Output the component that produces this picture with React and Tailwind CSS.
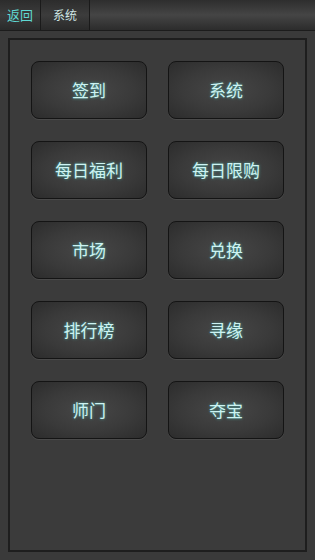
import React from "react";

const items = [
  "签到",
  "系统",
  "每日福利",
  "每日限购",
  "市场",
  "兑换",
  "排行榜",
  "寻缘",
  "师门",
  "夺宝",
];

const font = {
  fontFamily: '"Noto Sans CJK SC", "Noto Sans", sans-serif',
};

const App = () => {
  return (
    <div
      className="w-[315px] h-[560px] bg-[#3a3a3a] flex flex-col overflow-hidden"
      style={font}
    >
      {/* Top tabs */}
      <div className="h-[31px] flex border-b border-[#1c1c1c] bg-gradient-to-b from-[#2e2e2e] via-[#454545] to-[#2c2c2c]">
        <button className="w-[41px] h-full border-r border-[#1a1a1a] text-[13px] text-[#5fd8d2] bg-gradient-to-b from-[#2c2c2c] via-[#3c3c3c] to-[#2a2a2a]">
          返回
        </button>
        <button className="w-[49px] h-full border-r border-[#1a1a1a] text-[12px] text-[#cfe6e4] bg-gradient-to-b from-[#2c2c2c] via-[#3c3c3c] to-[#2a2a2a]">
          系统
        </button>
      </div>

      {/* Panel */}
      <div className="flex-1 px-[8px] pt-[7px] pb-[8px]">
        <div className="h-full border-2 border-[#1e1e1e] bg-[#3b3b3b] px-[21px] pt-[21px]">
          <div className="grid grid-cols-2 gap-x-[21px] gap-y-[22px]">
            {items.map((label) => (
              <button
                key={label}
                className="h-[58px] rounded-[8px] border border-[#141414] bg-[radial-gradient(ellipse_at_center,#474747_0%,#3a3a3a_55%,#2c2c2c_100%)] shadow-[0_1px_0_#4a4a4a] text-[17px] text-[#cdf3f2] [text-shadow:0_0_3px_rgba(80,220,210,0.7)]"
              >
                {label}
              </button>
            ))}
          </div>
        </div>
      </div>
    </div>
  );
};

export default App;
